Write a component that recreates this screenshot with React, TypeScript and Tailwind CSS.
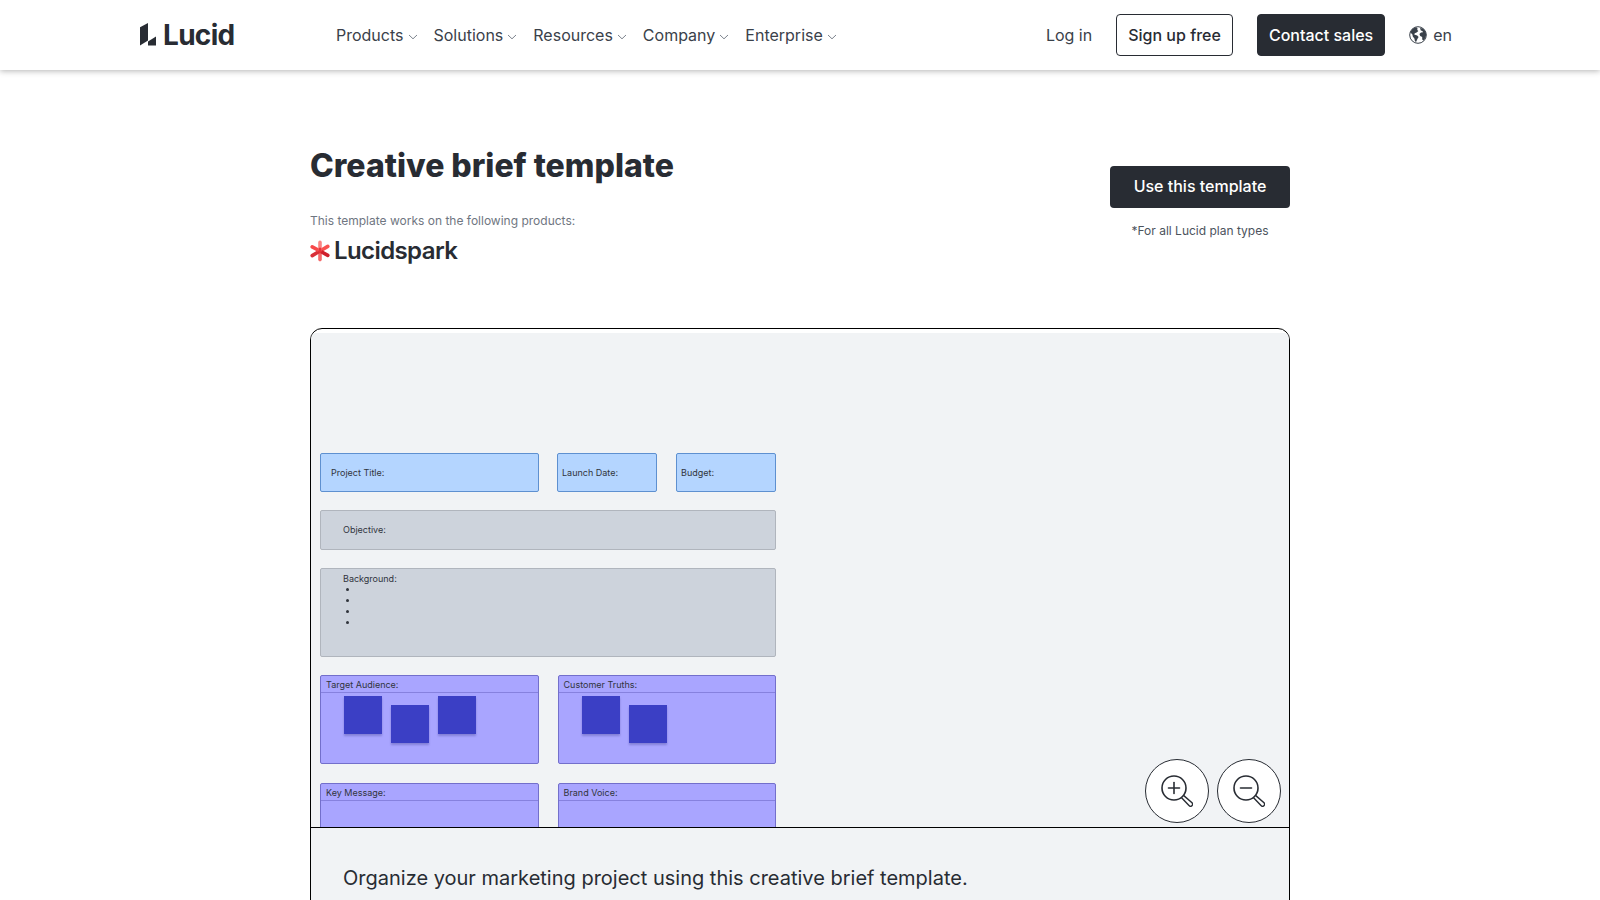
import React from 'react';

const navItems = ['Products', 'Solutions', 'Resources', 'Company', 'Enterprise'];

function Chevron() {
  return (
    <svg viewBox="0 0 10 6" className="mt-1 h-1.5 w-2.5 shrink-0" fill="none" stroke="#7d848e">
      <path d="M1 1 L5 4.8 L9 1" />
    </svg>
  );
}

function Globe() {
  return (
    <svg viewBox="0 0 18 18" className="size-[18px] shrink-0">
      <circle cx="9" cy="9" r="8.3" fill="none" stroke="#3a414a" />
      <path
        fill="#3a414a"
        d="M1.2 6.2 L3.6 2.8 L7.2 1.2 L8.6 2.4 L8.2 4 L9.4 5 L7.6 6.6 L5.8 7.2 L5.2 8.6 L8.2 9.4 L9.6 11 L8.4 13 L7.2 15.8 L6 15.4 L5.4 12.4 L3.8 10.6 L3.4 8.6 Z"
      />
      <path
        fill="#3a414a"
        d="M11 2 L14 2.6 L16.4 5.2 L17.2 8.4 L16.4 12 L14.4 14.6 L13.2 13.6 L13.2 11 L11.2 10 L10.4 8 L12 6.4 L14 6.2 L13.4 5 L11.8 4.4 Z"
      />
    </svg>
  );
}

function LucidLogo() {
  return (
    <a href="#" aria-label="Lucid home" className="flex w-[196px] items-center gap-[7px] text-[#282c33]">
      <svg viewBox="0 0 16 23" className="h-[23px] w-4 shrink-0" fill="currentColor">
        <path d="M0 4.2 L8 0 V17.6 L0 22.6 Z" />
        <path d="M8 18.6 L16 13.6 V22.4 H8 Z" />
      </svg>
      <span className="text-[28px] leading-7 font-bold tracking-tight">Lucid</span>
    </a>
  );
}

function SparkMark() {
  return (
    <svg viewBox="0 0 20 22" className="h-[22px] w-5 shrink-0" fill="none" strokeWidth="3.6" strokeLinecap="round">
      <path d="M10 11 V19.6" stroke="#f4696a" />
      <path d="M10 11 L17.8 6.4" stroke="#f9524f" />
      <path d="M10 11 L2.2 15.6" stroke="#d92f38" />
      <path d="M10 11 L2.2 6.8" stroke="#f7494a" />
      <path d="M10 11 L17.8 15.4" stroke="#cf1f2c" />
      <path d="M10 10 V2.4" stroke="#fb8583" />
      <path d="M10 11.5 V9" stroke="#e8343a" strokeWidth="3" />
    </svg>
  );
}

function Header() {
  return (
    <header className="relative bg-white shadow-[0_1px_6px_rgba(0,0,0,0.3)]">
      <div className="mx-auto flex h-[70px] max-w-[1320px] items-center pb-px">
        <LucidLogo />
        <nav className="flex items-center gap-4">
          {navItems.map((item) => (
            <button key={item} type="button" className="flex items-center gap-1 text-base text-[#3a414a]">
              {item}
              <Chevron />
            </button>
          ))}
        </nav>
        <div className="ml-auto flex items-center gap-6 pr-2 text-base">
          <a href="#" className="text-[#3a414a]">Log in</a>
          <a href="#" className="rounded border border-[#282c33] px-[11px] py-2 font-medium text-[#282c33]">
            Sign up free
          </a>
          <a href="#" className="rounded border border-[#282c33] bg-[#282c33] px-[11px] py-2 font-medium text-white">
            Contact sales
          </a>
          <button type="button" className="flex items-center gap-1.5 text-[#3a414a]">
            <Globe />
            en
          </button>
        </div>
      </div>
    </header>
  );
}

function Note({ low = false }: { low?: boolean }) {
  return (
    <div
      className={`size-[38px] bg-[#3b3fc5] shadow-[0_2px_2px_rgba(60,60,140,0.35)] ${low ? 'mt-[9px]' : ''}`}
    />
  );
}

function Panel({ title, children }: { title: string; children?: React.ReactNode }) {
  return (
    <div className="h-[89px] rounded-xs border border-[#736fcb] bg-[#a9a5ff]">
      <div className="border-b border-[#8681de] px-[5px] pt-0.5 leading-[14px]">{title}</div>
      <div className="flex items-start gap-[9px] px-[23px] pt-[3px]">{children}</div>
    </div>
  );
}

function Board() {
  return (
    <div className="flex w-[456px] flex-col gap-[18px] text-[9px] text-[#30343c]">
      <div className="flex h-[39px] *:flex *:items-center *:rounded-xs *:border *:border-[#5e90d0] *:bg-[#b4d5ff]">
        <div className="mr-[18px] w-[219px] px-2.5">Project Title:</div>
        <div className="w-[100px] px-1">Launch Date:</div>
        <div className="ml-auto w-[100px] px-1">Budget:</div>
      </div>
      <div className="flex h-10 items-center rounded-xs border border-[#b0b5bd] bg-[#cdd3dc] px-[22px]">
        Objective:
      </div>
      <div className="h-[89px] rounded-xs border border-[#b0b5bd] bg-[#cdd3dc] px-[22px] pt-1">
        <div className="leading-[11px]">Background:</div>
        <ul className="flex flex-col gap-2 px-[3px] pt-1">
          {[0, 1, 2, 3].map((n) => (
            <li key={n} className="size-[3px] rounded-full bg-[#30343c]" />
          ))}
        </ul>
      </div>
      <div className="grid grid-cols-2 gap-x-[19px] gap-y-[19px]">
        <Panel title="Target Audience:">
          <Note />
          <Note low />
          <Note />
        </Panel>
        <Panel title="Customer Truths:">
          <Note />
          <Note low />
        </Panel>
        <Panel title="Key Message:" />
        <Panel title="Brand Voice:" />
      </div>
    </div>
  );
}

function ZoomButton({ label, plus = false }: { label: string; plus?: boolean }) {
  return (
    <button
      type="button"
      aria-label={label}
      className="flex size-16 items-center justify-center rounded-full border border-[#282c33] bg-white"
    >
      <svg viewBox="0 0 32 32" className="size-8" fill="none" stroke="#282c33" strokeWidth="1.6" strokeLinecap="round">
        <circle cx="13" cy="13" r="12" />
        <path d="M7.5 13 H18.5" />
        {plus && <path d="M13 7.5 V18.5" />}
        <path d="M20.6 22.8 L28 30.6 A1.7 1.7 0 0 0 31 27.8 L22.8 20.6" strokeWidth="1.4" />
      </svg>
    </button>
  );
}

export default function App() {
  return (
    <div className="h-screen overflow-hidden bg-white font-['Inter','Liberation_Sans',sans-serif] text-[#282c33]">
      <Header />
      <main className="mx-auto max-w-[980px] pt-[76px]">
        <div className="flex items-start justify-between">
          <div>
            <h1 className="text-[32px] leading-10 font-extrabold">Creative brief template</h1>
            <p className="mt-[25px] text-xs leading-5 text-[#6f7681]">
              This template works on the following products:
            </p>
            <div className="mt-1.5 flex h-7 items-center gap-1">
              <SparkMark />
              <span className="text-2xl leading-7 font-semibold tracking-tight">Lucidspark</span>
            </div>
          </div>
          <div className="mt-5 text-center">
            <button type="button" className="w-[180px] rounded bg-[#282c33] pt-2 pb-2.5 text-base font-medium text-white">
              Use this template
            </button>
            <p className="mt-[13px] text-xs leading-5 text-[#4c535d]">*For all Lucid plan types</p>
          </div>
        </div>

        <section className="mt-[63px] overflow-hidden rounded-t-xl border border-black pt-1">
          <div className="relative h-[495px] overflow-hidden border-b border-black bg-[#f1f3f5] px-[9px] pt-[120px]">
            <Board />
            <div className="absolute right-2 bottom-1 flex gap-2">
              <ZoomButton label="Zoom in" plus />
              <ZoomButton label="Zoom out" />
            </div>
          </div>
          <p className="bg-[#f1f3f5] px-8 pt-9 pb-12 text-xl leading-7">
            Organize your marketing project using this creative brief template.
          </p>
        </section>
      </main>
    </div>
  );
}
